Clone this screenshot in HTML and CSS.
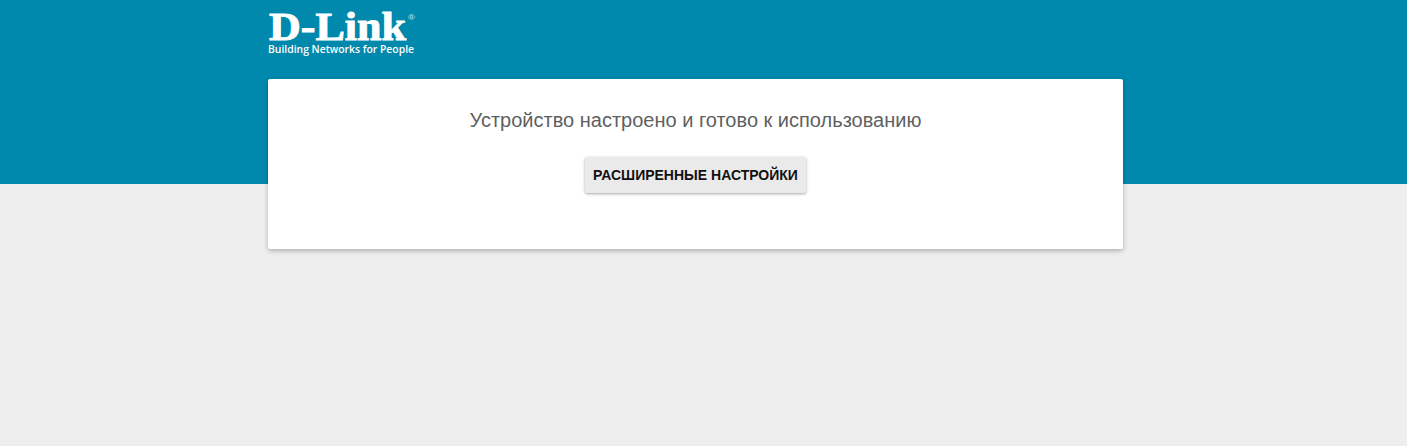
FILE: index.html
```html
<!DOCTYPE html>
<html lang="ru">
<head>
<meta charset="utf-8">
<title>D-Link</title>
<link rel="stylesheet" href="styles.css">
</head>
<body>
<header class="band">
	<div class="wrap logo">
		<svg class="logo-top" width="148" height="30" viewBox="0 0 148 30">
			<text class="logo-name" x="1" y="28" textLength="137" lengthAdjust="spacingAndGlyphs">D-Link</text>
			<text class="logo-reg" x="140" y="8" textLength="7" lengthAdjust="spacingAndGlyphs">®</text>
		</svg>
		<svg class="logo-bottom" width="148" height="15" viewBox="0 0 148 15">
			<text class="logo-tag" x="0" y="10.5" textLength="146" lengthAdjust="spacingAndGlyphs">Building Networks for People</text>
		</svg>
	</div>
</header>
<main class="wrap card">
	<h1 class="card-title">Устройство настроено и готово к использованию</h1>
	<button class="btn" type="button">Расширенные настройки</button>
</main>
</body>
</html>
```

FILE: styles.css
```css
html, body{
	height:100%;
}
body{
	margin:0;
	background:#eee;
	font-family:"Liberation Sans", Arial, sans-serif;
}
.wrap{
	width:855px;
	margin-left:268px;
}
.band{
	height:184px;
	background:#0088ad;
}
.logo{
	display:flex;
	flex-direction:column;
	padding-top:12px;
}
.logo svg{
	display:block;
	overflow:visible;
}
.logo-name{
	font-family:"Liberation Serif", serif;
	font-weight:bold;
	font-size:41px;
	fill:#fff;
	stroke:#fff;
	stroke-width:1px;
}
.logo-reg{
	font-size:8px;
	fill:#cfe8ef;
}
.logo-tag{
	font-family:"Open Sans", sans-serif;
	font-weight:600;
	font-size:11px;
	fill:#fff;
}
.card{
	box-sizing:border-box;
	height:170px;
	margin-top:-105px;
	padding-top:29px;
	background:#fff;
	border-radius:2px;
	box-shadow:0 2px 5px rgba(0,0,0,.26);
	text-align:center;
}
.card-title{
	margin:0 0 25px;
	font-size:20px;
	font-weight:normal;
	line-height:24px;
	color:#5f5f5f;
}
.btn{
	height:36px;
	padding:0 8px;
	border:0;
	border-radius:2px;
	background:#eaeaea;
	box-shadow:0 1px 3px rgba(0,0,0,.35);
	font-family:inherit;
	font-size:14px;
	font-weight:bold;
	text-transform:uppercase;
	color:#111;
}
```
